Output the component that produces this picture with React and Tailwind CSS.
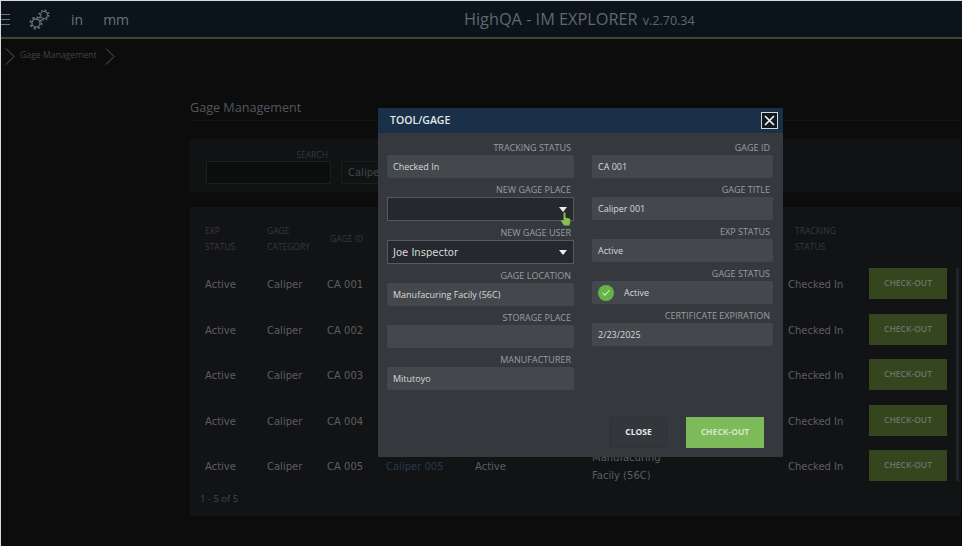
import React from "react";
import { Check } from "lucide-react";

const openSans = "font-['Open_Sans','Liberation_Sans',sans-serif]";
const dejaVu = "font-['DejaVu_Sans','Liberation_Sans',sans-serif]";

const rows = ["001", "002", "003", "004", "005"];
const tableGrid = "grid grid-cols-[62px_60px_59px_89px_117px_196px_81px_78px] items-center";

const Gear = ({ size, className }) => (
    <svg className={className} width={size} height={size} viewBox="0 0 16 16" fill="none" stroke="currentColor">
        <circle cx="8" cy="8" r="4.6" strokeWidth="1.5" />
        <circle cx="8" cy="8" r="6.4" strokeWidth="2" strokeDasharray="2.5 2.52" />
    </svg>
);

const Crumb = () => (
    <svg width="10" height="17" viewBox="0 0 10 17" fill="none" stroke="#55585b"><path d="M1 .5l8 8-8 8" /></svg>
);

const FieldLabel = ({ text }) => (
    <div className="h-[19px] pr-[3px] text-right text-[9px] leading-[23px] text-[#9a9da0]">{text}</div>
);

const Field = ({ label, value, children }) => (
    <div className="flex flex-col">
        <FieldLabel text={label} />
        <div className="flex h-[23px] items-center rounded-[2px] bg-[#44474c] px-[6px] text-[9px] text-[#d8d9da]">
            {children || value}
        </div>
    </div>
);

const SelectField = ({ label, value, children }) => (
    <div className="flex flex-col">
        <FieldLabel text={label} />
        <div className={`relative flex h-[24px] items-center justify-between border border-[#565a5e] bg-[#25282d] pl-[5px] pr-[6px] text-[10px] text-[#d8d9da] ${dejaVu}`}>
            <span>{value}</span>
            <svg width="8" height="5" viewBox="0 0 8 5"><path d="M0 0h8L4 5z" fill="#eceded" /></svg>
            {children}
        </div>
    </div>
);

const DataRow = ({ id }) => (
    <div className={`${tableGrid} h-[45.5px] text-[10px] text-[#5c5e62] ${dejaVu}`}>
        <span>Active</span>
        <span>Caliper</span>
        <span>CA {id}</span>
        <span className="text-[#26394a]">Caliper {id}</span>
        <span>Active</span>
        <span className="leading-[18px]">Manufacuring<br />Facily (56C)</span>
        <span>Checked In</span>
        <button className={`mb-[2px] h-[31px] w-[78px] bg-[#35461f] text-[8.5px] font-semibold text-[#6b736c] ${openSans}`}>CHECK-OUT</button>
    </div>
);

const ToolGageDialog = () => (
    <div className={`absolute left-[377px] top-[107px] flex h-[349px] w-[405px] flex-col bg-[#35393e] ${openSans}`}>
        <div className="flex h-[25px] shrink-0 items-center justify-between bg-[#1a3049] pl-[12px] pr-[5px]">
            <span className="text-[10.5px] font-semibold text-[#e4e6e8]">TOOL/GAGE</span>
            <button className="flex h-[17px] w-[17px] items-center justify-center border border-[#d5d8da] bg-[#101820]">
                <svg width="11" height="11" viewBox="0 0 11 11"><path d="M1 1l9 9M10 1l-9 9" stroke="#f1f2f3" strokeWidth="1.7" /></svg>
            </button>
        </div>
        <div className="flex gap-[18px] px-[9px] pt-[3px]">
            <div className="flex w-[187px] flex-col">
                <Field label="TRACKING STATUS" value="Checked In" />
                <SelectField label="NEW GAGE PLACE" value="">
                    <svg className="absolute right-[2px] top-[14px]" width="11" height="14" viewBox="0 0 11 14">
                        <path d="M3.5 1.2a1 1 0 0 1 2 0V5.5l3.8.9c.6.1 1 .6 1 1.2V10l-1 3.5H4L1 9c-.4-.6.4-1.3 1-.9l1.5 1z" fill="#86c04e" />
                    </svg>
                </SelectField>
                <SelectField label="NEW GAGE USER" value="Joe Inspector" />
                <Field label="GAGE LOCATION" value="Manufacuring Facily (56C)" />
                <Field label="STORAGE PLACE" value="" />
                <Field label="MANUFACTURER" value="Mitutoyo" />
            </div>
            <div className="flex w-[181px] flex-col">
                <Field label="GAGE ID" value="CA 001" />
                <Field label="GAGE TITLE" value="Caliper 001" />
                <Field label="EXP STATUS" value="Active" />
                <Field label="GAGE STATUS">
                    <span className="flex h-[16px] w-[16px] items-center justify-center rounded-full bg-[#67b246]">
                        <Check size={10} strokeWidth={2.5} className="text-[#d9f0cd]" />
                    </span>
                    <span className="ml-[10px]">Active</span>
                </Field>
                <Field label="CERTIFICATE EXPIRATION" value="2/23/2025" />
            </div>
        </div>
        <div className="mt-auto flex justify-end gap-[19px] pb-[9px] pr-[19px]">
            <button className="h-[31px] w-[57px] border border-[#2f3337] bg-[#33373c] text-[8.5px] font-bold text-[#e6e7e8]">CLOSE</button>
            <button className="h-[31px] w-[78px] bg-[#7cba5a] text-[8.5px] font-bold text-[#d3e6c6]">CHECK-OUT</button>
        </div>
    </div>
);

export default function App() {
    return (
        <div className={`relative h-[546px] w-[962px] overflow-hidden border-l border-t border-[#d9d9d9] bg-[#0c0c0d] ${openSans}`}>
            <header className="relative flex h-[38px] items-center border-b-2 border-[#3b4a2c] bg-[#0b141c] text-[#6d7277]">
                <div className="ml-[-1px] flex w-[10px] flex-col gap-[4px]">
                    <span className="h-[1px] bg-[#6d7277]" />
                    <span className="h-[1px] bg-[#6d7277]" />
                    <span className="h-[1px] bg-[#6d7277]" />
                </div>
                <div className="relative ml-[19px] h-[21px] w-[21px]">
                    <Gear size={14} className="absolute bottom-0 left-0" />
                    <Gear size={12} className="absolute right-0 top-0" />
                </div>
                <span className="ml-[21px] text-[14px]">in</span>
                <span className="ml-[20px] text-[14px]">mm</span>
                <span className="absolute left-[463px] text-[16.3px] text-[#63676b]">
                    HighQA - IM EXPLORER <span className="ml-[1px] text-[12.5px]">v.2.70.34</span>
                </span>
            </header>
            <div className="flex h-[34px] items-center text-[8.7px] text-[#404346]">
                <span className="ml-[4px]"><Crumb /></span>
                <span className="ml-[5px]">Gage Management</span>
                <span className="ml-[8px]"><Crumb /></span>
            </div>
            <main className="ml-[189px] w-[771px]">
                <h1 className="mt-[26px] text-[12.6px] leading-[18px] text-[#53575b]">Gage Management</h1>
                <div className="mt-[3px] h-[1px] bg-[#141516]" />
                <section className="mt-[18px] flex h-[53px] gap-[10px] bg-[#111214] pl-[16px] pt-[9px]">
                    <div className="flex w-[125px] flex-col">
                        <span className="pr-[3px] text-right text-[8.5px] leading-[13px] text-[#36393c]">SEARCH</span>
                        <div className="h-[23px] border border-[#1a2117] bg-[#0c0d0e]" />
                    </div>
                    <div className={`mt-[13px] flex h-[23px] w-[130px] items-center border border-[#1a2117] px-[6px] text-[10px] text-[#45484b] ${dejaVu}`}>Caliper</div>
                </section>
                <section className="relative mt-[15px] h-[309px] bg-[#121315] pl-[15px]">
                    <div className={`${tableGrid} h-[55px] pb-[7px] pt-[16px] text-[8.5px] leading-[16px] text-[#37393c]`}>
                        <span>EXP<br />STATUS</span>
                        <span>GAGE<br />CATEGORY</span>
                        <span className="ml-[3px]">GAGE ID</span>
                        <span>GAGE TITLE</span>
                        <span>EXP STATUS</span>
                        <span>GAGE LOCATION</span>
                        <span className="ml-[7px]">TRACKING<br />STATUS</span>
                        <span />
                    </div>
                    {rows.map(id => <DataRow key={id} id={id} />)}
                    <div className="absolute bottom-[10px] left-[10px] text-[9.5px] text-[#45484b]">1 - 5 of 5</div>
                    <div className="absolute right-[2px] top-[61px] h-[213px] w-[3px] bg-[#212427]" />
                </section>
            </main>
            <ToolGageDialog />
        </div>
    );
}
